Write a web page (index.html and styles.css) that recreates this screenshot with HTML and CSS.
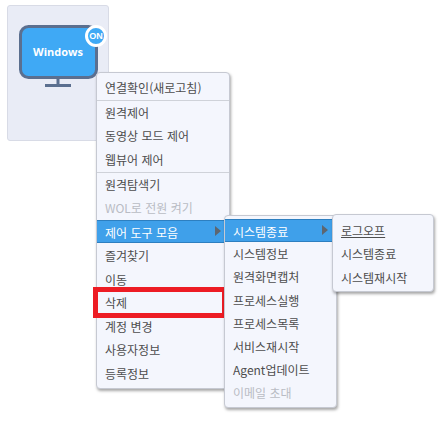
FILE: index.html
```html
<!DOCTYPE html>
<html lang="ko">
<head>
    <meta charset="UTF-8">
    <title>제어 메뉴</title>
    <link rel="stylesheet" href="styles.css">
</head>
<body>
    <div class="card">
        <svg class="monitor" width="80" height="62" viewBox="0 0 80 62">
            <rect x="1.5" y="1.5" width="76" height="51" rx="8" fill="#3fa9f5" stroke="#5b6f8f" stroke-width="3"/>
            <path d="M39 53v7M26 60.5h26" fill="none" stroke="#5b6f8f" stroke-width="3"/>
        </svg>
        <span class="monitor-label">Windows</span>
        <span class="badge">ON</span>
    </div>

    <ul class="menu menu-main">
        <li class="sep">연결확인(새로고침)</li>
        <li>원격제어</li>
        <li>동영상 모드 제어</li>
        <li class="sep">웹뷰어 제어</li>
        <li>원격탐색기</li>
        <li class="off">WOL로 전원 켜기</li>
        <li class="active arrow">제어 도구 모음</li>
        <li>즐겨찾기</li>
        <li>이동</li>
        <li>삭제</li>
        <li>계정 변경</li>
        <li>사용자정보</li>
        <li>등록정보</li>
    </ul>
    <div class="mark"></div>

    <ul class="menu menu-tools">
        <li class="active arrow">시스템종료</li>
        <li>시스템정보</li>
        <li>원격화면캡처</li>
        <li>프로세스실행</li>
        <li>프로세스목록</li>
        <li>서비스재시작</li>
        <li>Agent업데이트</li>
        <li class="off">이메일 초대</li>
    </ul>

    <ul class="menu menu-power">
        <li class="under">로그오프</li>
        <li>시스템종료</li>
        <li>시스템재시작</li>
    </ul>
</body>
</html>
```

FILE: styles.css
```css
* {
    margin: 0;
    padding: 0;
    box-sizing: border-box;
}

body {
    font-family: "Noto Sans CJK KR", "Noto Sans", sans-serif;
    font-size: 12px;
    color: #4d4d4d;
    background: #fff;
    height: 425px;
    overflow: hidden;
    padding: 5px 0 0 7px;
}

.card {
    position: relative;
    width: 102px;
    height: 136px;
    background: #e9ecf6;
    border: 1px solid #d8dbe6;
    border-radius: 3px;
}

.monitor {
    position: absolute;
    left: 11px;
    top: 19px;
}

.monitor-label {
    position: absolute;
    left: 11px;
    top: 38px;
    width: 78px;
    text-align: center;
    font-family: "Open Sans", sans-serif;
    font-size: 11px;
    font-weight: 700;
    color: #fff;
}

.badge {
    position: absolute;
    left: 77px;
    top: 19px;
    width: 22px;
    height: 22px;
    border: 3px solid #fff;
    border-radius: 50%;
    background: #3fa9f5;
    color: #fff;
    font-family: "Liberation Sans", sans-serif;
    font-size: 9px;
    font-weight: 700;
    line-height: 16px;
    text-align: center;
}

.menu {
    position: absolute;
    list-style: none;
    background: #f4f6fd;
    border: 1px solid #c6c9d2;
    border-radius: 4px;
    box-shadow: 1px 2px 3px rgba(0, 0, 0, 0.35);
}

.menu li {
    height: 23.4px;
    line-height: 23px;
    padding-left: 8px;
    white-space: nowrap;
}

.menu .sep {
    height: 25px;
    border-bottom: 1px solid #cfd2d9;
}

.menu .off {
    color: #b9bcc4;
}

.menu .under {
    text-decoration: underline;
}

.menu .active {
    position: relative;
    background: #3fa0ea;
    color: #fff;
    border-top: 1px solid #2d7fc0;
    border-bottom: 1px solid #2d7fc0;
}

.arrow::after {
    content: "";
    position: absolute;
    right: 8px;
    top: 5px;
    border-left: 6px solid #5d6670;
    border-top: 5px solid transparent;
    border-bottom: 5px solid transparent;
}

.menu-main {
    left: 96px;
    top: 72px;
    width: 134px;
    height: 317px;
    padding-top: 3px;
}

.menu-main .active {
    margin-bottom: 1px;
}

.menu-main .active ~ li {
    height: 23.6px;
}

.menu-tools {
    left: 224px;
    top: 215px;
    width: 113px;
    height: 193px;
    padding-top: 3px;
}

.menu-tools li {
    height: 23.2px;
}

.menu-power {
    left: 332px;
    top: 214px;
    width: 102px;
    height: 78px;
    padding-top: 4px;
}

.mark {
    position: absolute;
    left: 93px;
    top: 287px;
    width: 134px;
    height: 31px;
    border: 5px solid #ed1c24;
}
```
